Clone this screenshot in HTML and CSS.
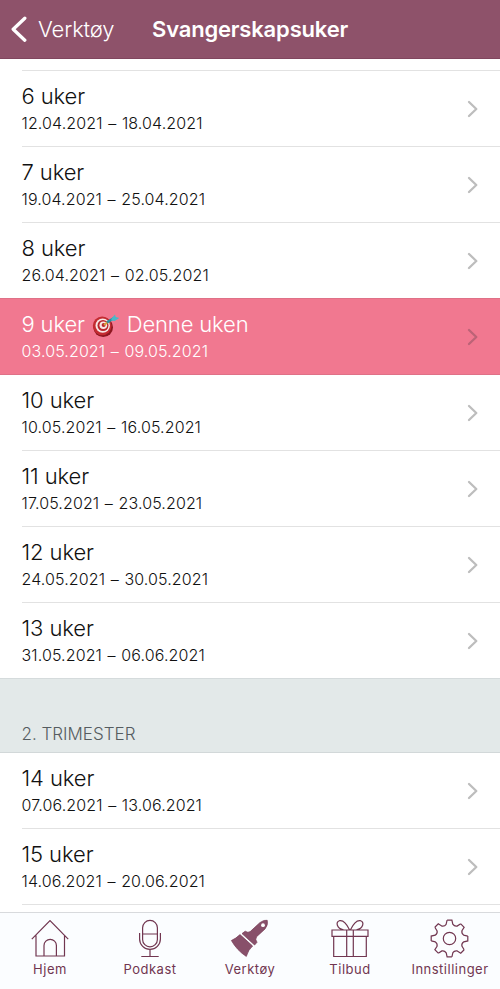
FILE: index.html
```html
<!DOCTYPE html>
<html lang="nb">
<head>
<meta charset="utf-8">
<meta name="viewport" content="width=device-width, initial-scale=1">
<title>Svangerskapsuker</title>
<link rel="stylesheet" href="styles.css">
</head>
<body>
<svg class="defs" aria-hidden="true">
  <symbol id="chevron" viewBox="0 0 12 18"><path d="M2 2l7.3 7L2 16" fill="none" stroke="currentColor" stroke-width="2.3" stroke-linecap="round" stroke-linejoin="round"/></symbol>
</svg>
<div class="app">
  <header class="navbar">
    <a class="back"><svg width="18" height="28" viewBox="0 0 18 28"><path d="M15.800 3.200L4.200 14.200 15.800 25.200" fill="none" stroke="currentColor" stroke-width="3.3" stroke-linecap="round" stroke-linejoin="round"/></svg><span>Verktøy</span></a>
    <h1>Svangerskapsuker</h1>
  </header>
  <main class="content">
    <ul class="list first">
      <li class="row"><div class="text"><div class="week">6 uker</div><div class="dates">12.04.2021 – 18.04.2021</div></div><svg class="chev"><use href="#chevron"/></svg></li>
      <li class="row"><div class="text"><div class="week">7 uker</div><div class="dates">19.04.2021 – 25.04.2021</div></div><svg class="chev"><use href="#chevron"/></svg></li>
      <li class="row"><div class="text"><div class="week">8 uker</div><div class="dates">26.04.2021 – 02.05.2021</div></div><svg class="chev"><use href="#chevron"/></svg></li>
      <li class="row current"><div class="text"><div class="week">9 uker<svg class="target" width="28" height="24" viewBox="0 0 28 24"><ellipse cx="11.2" cy="13.2" rx="9.8" ry="9.8" fill="#8d1720"/><circle cx="10.2" cy="11.8" r="9.4" fill="#c32b31"/><circle cx="10.7" cy="11.6" r="7.2" fill="#f7e6e4"/><circle cx="11" cy="11.5" r="5.5" fill="#b9262d"/><circle cx="11.3" cy="11.3" r="3.8" fill="#f7e6e4"/><circle cx="11.6" cy="11.1" r="2" fill="#b9262d"/><path d="M12 11l4-3" stroke="#d8a237" stroke-width="1.8"/><path d="M15 8.4l7-4.4" stroke="#2d8fa0" stroke-width="2.6"/><path d="M19.5 4.5L23 .4l.7 2.6 3.7 1-4.8 3-3.4-.4z" fill="#49b9c8"/></svg><span>Denne uken</span></div><div class="dates">03.05.2021 – 09.05.2021</div></div><svg class="chev"><use href="#chevron"/></svg></li>
      <li class="row"><div class="text"><div class="week">10 uker</div><div class="dates">10.05.2021 – 16.05.2021</div></div><svg class="chev"><use href="#chevron"/></svg></li>
      <li class="row"><div class="text"><div class="week">11 uker</div><div class="dates">17.05.2021 – 23.05.2021</div></div><svg class="chev"><use href="#chevron"/></svg></li>
      <li class="row"><div class="text"><div class="week">12 uker</div><div class="dates">24.05.2021 – 30.05.2021</div></div><svg class="chev"><use href="#chevron"/></svg></li>
      <li class="row"><div class="text"><div class="week">13 uker</div><div class="dates">31.05.2021 – 06.06.2021</div></div><svg class="chev"><use href="#chevron"/></svg></li>
    </ul>
    <h2 class="section">2. TRIMESTER</h2>
    <ul class="list second">
      <li class="row"><div class="text"><div class="week">14 uker</div><div class="dates">07.06.2021 – 13.06.2021</div></div><svg class="chev"><use href="#chevron"/></svg></li>
      <li class="row"><div class="text"><div class="week">15 uker</div><div class="dates">14.06.2021 – 20.06.2021</div></div><svg class="chev"><use href="#chevron"/></svg></li>
    </ul>
  </main>
  <nav class="tabbar">
    <a class="tab"><svg viewBox="0 0 40 40"><path d="M1.8 21.2L20 2.500l18.200 18.700M6 17.500v20.500h28.500V17.500M14 38V27.500a6.200 6.200 0 0 1 12.400 0V38"/></svg><span>Hjem</span></a>
    <a class="tab"><svg viewBox="0 0 40 40"><rect x="12.6" y="2.400" width="14.8" height="26.4" rx="7.4"/><path d="M12.6 16h14.8M9.6 15v6a10.4 10.4 0 0 0 20.8 0v-6M20 31.400v7M11.3 38.500h17.4"/></svg><span>Podkast</span></a>
    <a class="tab"><svg viewBox="0 0 40 40"><path class="solid" d="M10 16.600Q6 20.500 1.400 22.500 7 32.500 16.300 38.400 18.200 31.800 22.600 28z"/><path class="solid" d="M12 15.600L15.200 13.200Q18 15.200 20.200 13.600L29.800 4.700Q34 1.500 37.200 2.300 38.500 6.600 35 11L26.600 18.700Q24.800 21.400 27 24.300L24.600 27z"/><circle class="hole" cx="33" cy="7.2" r="1.9"/></svg><span>Verktøy</span></a>
    <a class="tab"><svg viewBox="0 0 40 40"><path d="M2 12h36v6.4H2zM3.7 18.400h32.600V38.500H3.700zM16.700 12V38.500M23.300 12V38.500M19.500 11.800C17 6.500 13 2 9.500 2.700 5.500 4 6.500 10.500 13.500 11.800M20.500 11.800C23 6.500 27 2 30.500 2.700 34.500 4 33.500 10.500 26.500 11.800"/></svg><span>Tilbud</span></a>
    <a class="tab"><svg viewBox="0 0 40 40"><g transform="translate(19.500 20.500)"><path id="tooth" d="M-2.400-18.300H2.400L3.300-14.300Q5-11.800 7.600-12.400L11.240-14.640"/><use href="#tooth" transform="rotate(45)"/><use href="#tooth" transform="rotate(90)"/><use href="#tooth" transform="rotate(135)"/><use href="#tooth" transform="rotate(180)"/><use href="#tooth" transform="rotate(225)"/><use href="#tooth" transform="rotate(270)"/><use href="#tooth" transform="rotate(315)"/><circle r="6.200"/></g></svg><span>Innstillinger</span></a>
  </nav>
</div>
</body>
</html>
```
FILE: styles.css
```css
* { box-sizing: border-box; }
body { margin: 0; background: #fff; font-family: Inter, "Liberation Sans", sans-serif; color: #111; }
.defs { display: none; }
.app { width: 500px; height: 989px; display: flex; flex-direction: column; overflow: hidden; }
.navbar { flex: none; height: 59px; background: #8e526a; border-bottom: 1px solid #80465e; color: #fff; display: flex; align-items: center; padding-left: 9px; }
.back { display: flex; align-items: center; gap: 11px; width: 143px; font-size: 22px; font-weight: 300; letter-spacing: -0.15px; }
.back svg { flex: none; }
h1 { margin: 0; font-size: 22px; font-weight: 600; letter-spacing: -0.18px; line-height: 28px; }
.content { flex: 1; min-height: 0; overflow: hidden; }
.list { list-style: none; margin: 0; padding: 0; }
.first { padding-top: 12px; background: linear-gradient(#e2e2e2, #e2e2e2) 22px 11px / 478px 1px no-repeat; }
.row { height: 76px; padding: 0 21px 0 22px; display: flex; align-items: center; justify-content: space-between; background: linear-gradient(#e2e2e2, #e2e2e2) 22px 100% / 478px 1px no-repeat; }
.text { padding-bottom: 2px; margin-left: -0.5px; }
.week { font-size: 22px; line-height: 28px; font-weight: 350; letter-spacing: -0.1px; display: flex; align-items: center; white-space: pre; }
.dates { font-size: 16px; line-height: 22px; margin-top: 2px; font-weight: 350; letter-spacing: 0.11px; word-spacing: 1px; white-space: nowrap; }
.chev { width: 12px; height: 18px; color: #bdbdbd; flex: none; }
.current { background: #f17890; color: #fff; margin-top: -1px; height: 77px; padding-top: 1px; border-bottom: 1px solid #df7187; border-top: 1px solid #df7187; }
.current .chev { color: #bc6377; }
.current .week { height: 28px; font-weight: 300; letter-spacing: -0.15px; }
.target { margin: 4px 7px 0 7px; }
.section { margin: -1px 0 0; height: 75px; background: #e3e9e9; border-top: 1px solid #d5dbdc; border-bottom: 1px solid #d2d8d9; padding: 43px 21.5px 0; font-size: 17px; line-height: 24px; font-weight: 300; color: #555c60; }
.tabbar { flex: none; height: 77px; background: #fbfdff; border-top: 1px solid #d8dadd; display: grid; grid-template-columns: repeat(5, 100px); color: #713650; }
.tab { display: flex; flex-direction: column; align-items: center; padding-top: 5px; font-size: 13px; line-height: 18px; letter-spacing: 0.5px; }
.tab svg { width: 40px; height: 40px; fill: none; stroke: currentColor; stroke-width: 1.2; }
.tab span { margin: 2px 0 0; }
.tab .solid { fill: #88506a; stroke: #743852; stroke-width: 0.7; }
.tab .hole { fill: #fff; stroke: none; }
```
